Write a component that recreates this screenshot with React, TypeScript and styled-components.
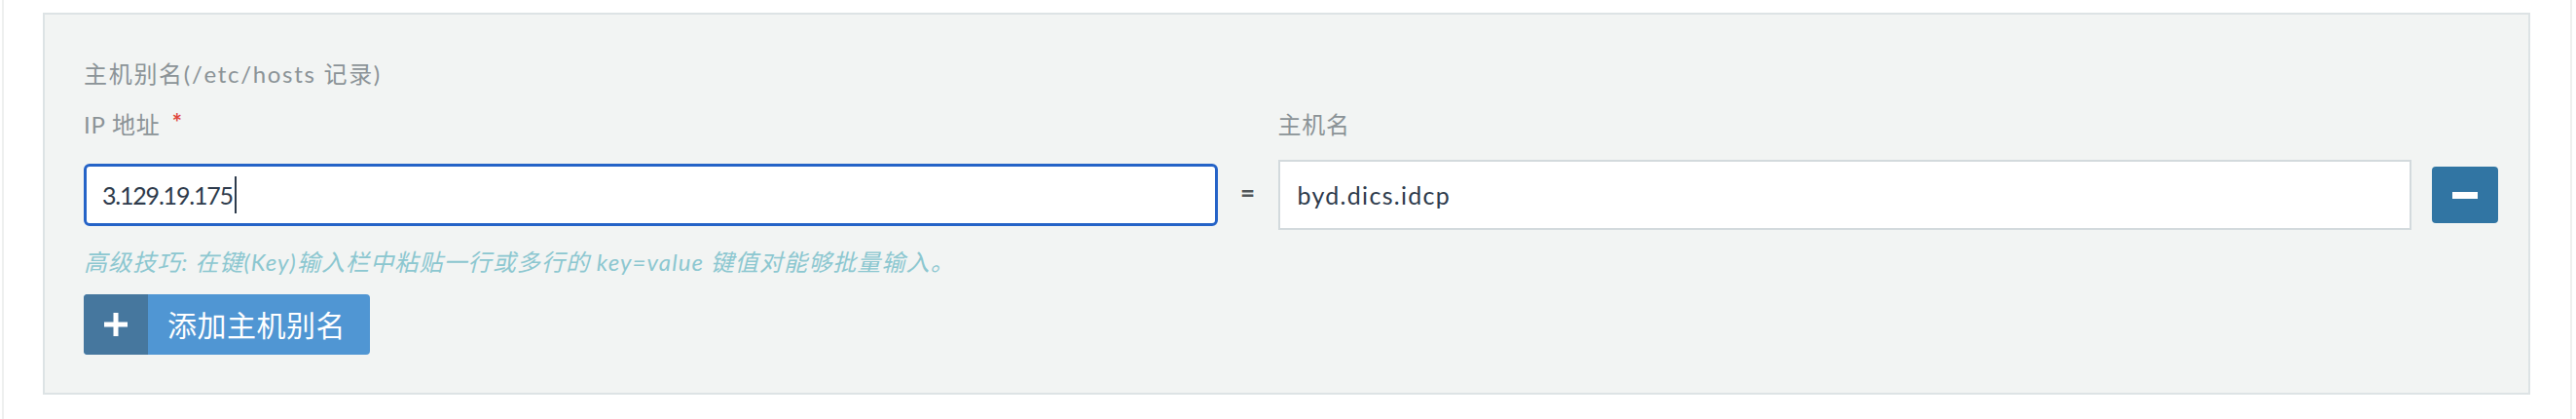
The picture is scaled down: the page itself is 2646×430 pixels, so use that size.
import React from "react";
import styled, { createGlobalStyle } from "styled-components";

const GlobalStyle = createGlobalStyle`
  html, body {
    margin: 0;
    padding: 0;
    background: #ffffff;
  }
  body {
    font-family: Lato, "Noto Sans CJK SC", sans-serif;
  }
  * { box-sizing: border-box; }
`;

const Page = styled.div`
  height: 430px;
  width: 2640px;
  margin-left: 2px;
  border-left: 2px solid #eef0ef;
  border-right: 2px solid #eef0ef;
  padding: 13px 41px 0 40px;
`;

const Panel = styled.section`
  background: #f2f4f3;
  border: 2px solid #dde3e5;
  height: 392px;
  padding: 46px 31px 0 40px;
  display: flex;
  flex-direction: column;
`;

const Title = styled.div`
  font-family: Lato, "Noto Sans CJK SC", sans-serif;
  font-size: 24px;
  line-height: 30px;
  color: #8b9397;
  letter-spacing: 1.7px;
`;

const Fields = styled.div`
  display: grid;
  grid-template-columns: 1fr 62px 1fr 89px;
  grid-template-rows: 30px 72px;
  row-gap: 21px;
  margin-top: 22px;
  align-items: center;
`;

const Label = styled.div<{ $col: number }>`
  grid-column: ${(p) => p.$col};
  grid-row: 1;
  font-size: 24px;
  line-height: 30px;
  color: #8b9397;
  letter-spacing: 0.8px;
  display: flex;
  align-items: flex-start;
`;

const Required = styled.span`
  color: #e0483e;
  font-size: 24px;
  line-height: 24px;
  margin-left: 12px;
  margin-top: 1px;
  font-weight: 700;
`;

const FocusedInput = styled.div`
  grid-column: 1;
  grid-row: 2;
  height: 64px;
  border: 3px solid #2563c7;
  border-radius: 6px;
  background: #ffffff;
  display: flex;
  align-items: center;
  padding-left: 16px;
  font-size: 25px;
  color: #2e3b4c;
  letter-spacing: -1.2px;
`;

const Caret = styled.span`
  display: inline-block;
  width: 2px;
  height: 38px;
  background: #2e3b4c;
  margin-left: 2px;
`;

const Equals = styled.div`
  grid-column: 2;
  grid-row: 2;
  text-align: center;
  font-size: 26px;
  font-weight: 700;
  color: #505558;
  padding-bottom: 6px;
`;

const TextInput = styled.input`
  grid-column: 3;
  grid-row: 2;
  height: 72px;
  width: 100%;
  border: 2px solid #d3dadd;
  border-radius: 0;
  background: #ffffff;
  padding: 0 0 0 18px;
  font-family: Lato, "Noto Sans CJK SC", sans-serif;
  font-size: 25px;
  color: #2e3b4c;
  letter-spacing: 1.3px;
  outline: none;
`;

const RemoveButton = styled.button`
  grid-column: 4;
  grid-row: 2;
  justify-self: end;
  width: 68px;
  height: 58px;
  border: none;
  border-radius: 4px;
  background: #3175a3;
  display: flex;
  align-items: center;
  justify-content: center;
  padding: 0;
  cursor: pointer;
`;

const MinusBar = styled.span`
  display: block;
  width: 26px;
  height: 7px;
  background: #ffffff;
`;

const Hint = styled.div`
  margin-top: 18px;
  font-size: 24px;
  line-height: 30px;
  font-style: italic;
  color: #8cc7d0;
  letter-spacing: 1.1px;
`;

const AddButton = styled.button`
  margin-top: 18px;
  align-self: flex-start;
  display: flex;
  align-items: stretch;
  height: 62px;
  padding: 0;
  border: none;
  border-radius: 4px;
  overflow: hidden;
  background: #5096d3;
  cursor: pointer;
`;

const AddIcon = styled.span`
  width: 66px;
  background: #46779e;
  display: flex;
  align-items: center;
  justify-content: center;
`;

const AddLabel = styled.span`
  display: flex;
  align-items: center;
  padding: 0 25px 2px 20px;
  font-family: "Noto Sans CJK SC", sans-serif;
  font-size: 30px;
  color: #ffffff;
  letter-spacing: 0.5px;
`;

export default function App() {
  return (
    <>
      <GlobalStyle />
      <Page>
        <Panel>
          <Title>主机别名(/etc/hosts 记录)</Title>
          <Fields>
            <Label $col={1}>
              IP 地址<Required>*</Required>
            </Label>
            <Label $col={3}>主机名</Label>
            <FocusedInput>
              3.129.19.175
              <Caret />
            </FocusedInput>
            <Equals>=</Equals>
            <TextInput defaultValue="byd.dics.idcp" />
            <RemoveButton aria-label="删除">
              <MinusBar />
            </RemoveButton>
          </Fields>
          <Hint>高级技巧: 在键(Key)输入栏中粘贴一行或多行的 key=value 键值对能够批量输入。</Hint>
          <AddButton>
            <AddIcon>
              <svg width="24" height="24" viewBox="0 0 24 24">
                <rect x="9.5" y="0" width="5" height="24" fill="#ffffff" />
                <rect x="0" y="9.5" width="24" height="5" fill="#ffffff" />
              </svg>
            </AddIcon>
            <AddLabel>添加主机别名</AddLabel>
          </AddButton>
        </Panel>
      </Page>
    </>
  );
}
